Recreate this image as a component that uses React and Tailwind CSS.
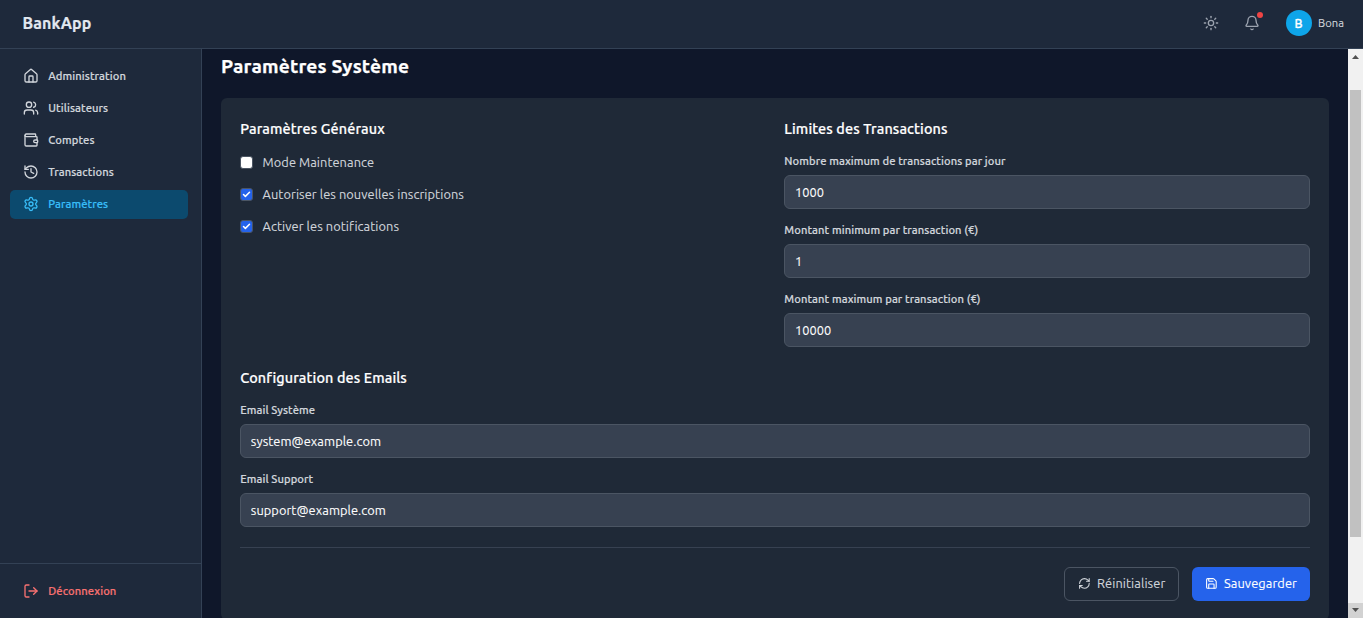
import { House, Users, Wallet, History, Settings, LogOut, Sun, Bell, RefreshCw, Save, Check } from "lucide-react";

const nav = [
  { label: "Administration", icon: House },
  { label: "Utilisateurs", icon: Users },
  { label: "Comptes", icon: Wallet },
  { label: "Transactions", icon: History },
  { label: "Paramètres", icon: Settings, active: true },
];

function Heading({ children }) {
  return <h2 className="mb-[10px] h-[22px] text-[14.4px] leading-[22px] font-medium tracking-[0.11px] whitespace-nowrap text-white [-webkit-text-stroke:0.2px]">{children}</h2>;
}

function Field({ label, value }) {
  return (
    <label className="flex flex-col">
      <span className="mb-[6px] h-[16px] text-[11.2px] leading-[16px] font-medium tracking-[0.08px] whitespace-nowrap text-[#d1d5db] [-webkit-text-stroke:0.2px]">{label}</span>
      <input
        readOnly
        value={value}
        className="h-[34px] w-full rounded-[6px] border border-[#4b5563] bg-[#374151] px-[9.6px] text-[12.8px] tracking-[0.07px] text-white outline-none [-webkit-text-stroke:0.1px]"
      />
    </label>
  );
}

function Option({ label, checked }) {
  return (
    <div className="flex h-[20px] items-center gap-[9.4px]">
      <span className={"flex size-[13px] items-center justify-center rounded-[3px] border border-[#4b5563] " + (checked ? "bg-[#2563eb]" : "bg-white")}>
        {checked && <Check className="size-[9px] text-white" strokeWidth={4} />}
      </span>
      <span className="text-[12.8px] leading-[20px] tracking-[0.07px] whitespace-nowrap text-[#d1d5db] [-webkit-text-stroke:0.1px]">{label}</span>
    </div>
  );
}

export default function App() {
  return (
    <div className="flex h-[618px] w-[1363px] flex-col overflow-hidden bg-[#0f172a] font-['Ubuntu','Noto_Sans',sans-serif]">
      <header className="flex h-[49px] shrink-0 items-center justify-between border-b border-[#334155] bg-[#1e293b] pr-[19px] pb-[2px] pl-[22.4px]">
        <span className="text-[16px] leading-[24px] font-bold tracking-[0.17px] text-[#e2e8f0] [-webkit-text-stroke:0.2px]">BankApp</span>
        <div className="flex items-center">
          <Sun className="mr-[25px] size-4 text-[#9ca3af]" strokeWidth={2} />
          <div className="relative mr-[26px]">
            <Bell className="size-4 text-[#9ca3af]" strokeWidth={2} />
            <span className="absolute -top-[3px] left-[13px] size-[6px] rounded-full bg-[#ef4444]" />
          </div>
          <span className="flex size-[25.6px] items-center justify-center rounded-full bg-[#0ea5e9] pr-px text-[12.4px] font-medium text-white [-webkit-text-stroke:0.3px]">B</span>
          <span className="ml-[6.2px] text-[11.2px] tracking-[0.04px] text-[#d1d5db] [-webkit-text-stroke:0.1px]">Bona</span>
        </div>
      </header>
      <div className="flex min-h-0 flex-1">
        <aside className="flex w-[202px] shrink-0 flex-col justify-between border-r border-[#334155] bg-[#1e293b]">
          <nav className="flex flex-col gap-[3px] px-[10px] pt-[13px]">
            {nav.map(({ label, icon: Icon, active }) => (
              <a key={label} className={"flex h-[29px] w-[178px] items-center gap-[9.2px] rounded-[5px] pb-px pl-[13px] text-[11.2px] font-medium tracking-[0.1px] " + (active ? "bg-[#0c4a6e] text-[#38bdf8]" : "text-[#d1d5db]")}>
                <Icon className="size-4" strokeWidth={2} />
                <span className="[-webkit-text-stroke:0.2px]">{label}</span>
              </a>
            ))}
          </nav>
          <div className="flex h-[55px] items-center gap-[9.2px] border-t border-[#334155] pl-[23px] text-[11.2px] font-medium tracking-[0.1px] text-[#f87171]">
            <LogOut className="size-4" strokeWidth={2} />
            <span className="[-webkit-text-stroke:0.2px]">Déconnexion</span>
          </div>
        </aside>
        <main className="flex min-w-0 flex-1 flex-col overflow-hidden pr-[19px] pl-[19px]">
          <h1 className="mt-[5px] mb-[19px] h-[25px] shrink-0 text-[19.2px] leading-[25px] font-bold tracking-[0.17px] text-white [-webkit-text-stroke:0.25px]">Paramètres Système</h1>
          <section className="flex h-[522px] shrink-0 flex-col rounded-[6px] bg-[#1f2937] px-[19.2px] pt-[20px]">
            <div className="grid h-[249px] grid-cols-2 gap-[18.7px]">
              <div>
                <Heading>Paramètres Généraux</Heading>
                <div className="flex flex-col gap-[12px] pt-[2px]">
                  <Option label="Mode Maintenance" />
                  <Option label="Autoriser les nouvelles inscriptions" checked />
                  <Option label="Activer les notifications" checked />
                </div>
              </div>
              <div>
                <Heading>Limites des Transactions</Heading>
                <div className="flex flex-col gap-[13px] pt-[3px]">
                  <Field label="Nombre maximum de transactions par jour" value="1000" />
                  <Field label="Montant minimum par transaction (€)" value="1" />
                  <Field label="Montant maximum par transaction (€)" value="10000" />
                </div>
              </div>
            </div>
            <Heading>Configuration des Emails</Heading>
            <div className="flex flex-col gap-[13px] pt-[3px]">
              <Field label="Email Système" value="system@example.com" />
              <Field label="Email Support" value="support@example.com" />
            </div>
            <div className="mt-[20px] flex justify-end gap-[13px] border-t border-[#374151] pt-[19px] text-[12.8px] tracking-[0.09px]">
              <button className="flex h-[34px] w-[115px] items-center gap-[6.4px] rounded-[6px] border border-[#4b5563] pb-px pl-[13px] text-[#d1d5db]">
                <RefreshCw className="size-[12.8px]" />
                <span className="[-webkit-text-stroke:0.1px]">Réinitialiser</span>
              </button>
              <button className="flex h-[34px] w-[118px] items-center gap-[6.4px] rounded-[6px] bg-[#2563eb] pb-px pl-[13px] text-white">
                <Save className="size-[12.8px]" />
                <span className="[-webkit-text-stroke:0.1px]">Sauvegarder</span>
              </button>
            </div>
          </section>
        </main>
        <div className="flex w-[15px] shrink-0 flex-col items-center bg-[#f1f1f1]">
          <svg className="h-[15px] w-[15px]" viewBox="0 0 15 15"><path d="M4 10h7L7.5 6z" fill="#505050" /></svg>
          <div className="mt-[26px] h-[447px] w-[11px] bg-[#c1c1c1]" />
          <div className="flex-1" />
          <svg className="h-[15px] w-[15px] bg-[#d2d2d2]" viewBox="0 0 15 15"><path d="M4 5h7L7.5 9z" fill="#505050" /></svg>
        </div>
      </div>
    </div>
  );
}
